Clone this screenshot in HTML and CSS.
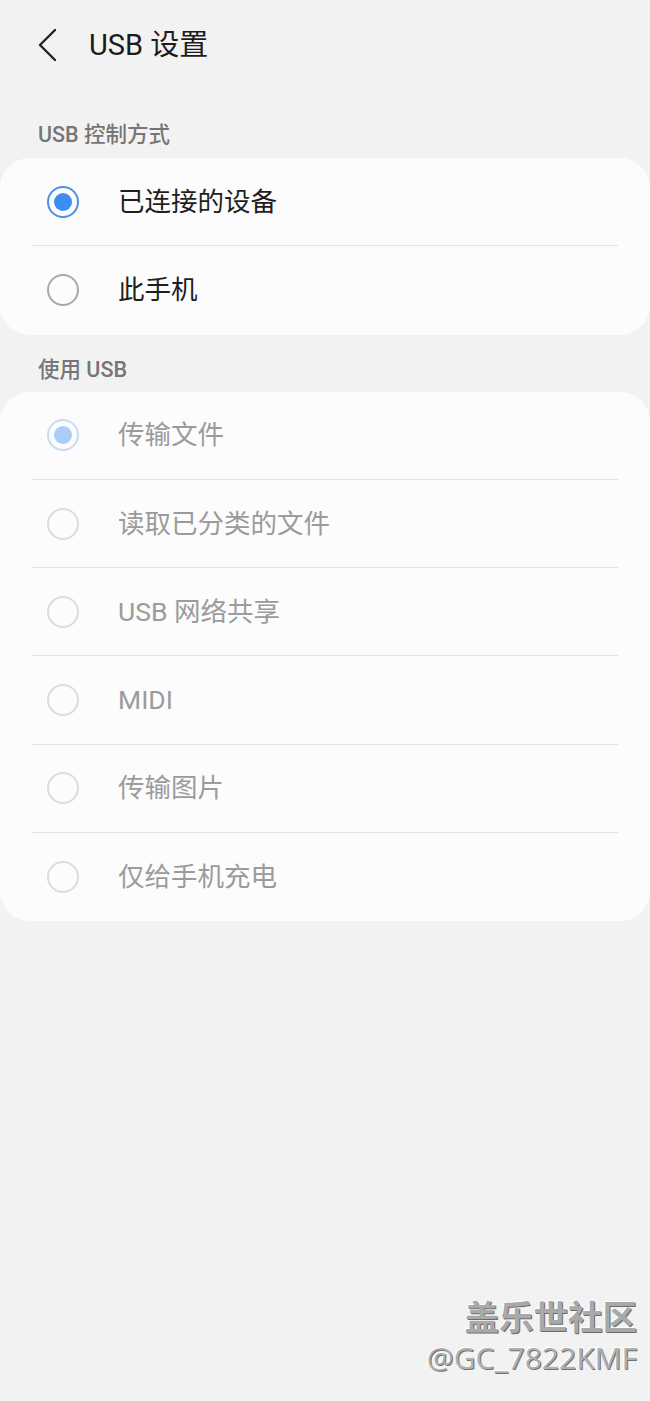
FILE: index.html
```html
<!DOCTYPE html>
<html lang="zh-CN">
<head>
<meta charset="utf-8">
<title>USB 设置</title>
<link rel="stylesheet" href="styles.css">
</head>
<body>
<div class="page">
  <header class="appbar">
    <svg class="back" width="24" height="36" viewBox="0 0 24 36"><polyline points="18,3 3,18 18,33" fill="none" stroke="#222" stroke-width="2.4" stroke-linecap="round" stroke-linejoin="round"/></svg>
    <h1 class="title">USB 设置</h1>
  </header>

  <div class="section-label first">USB 控制方式</div>
  <div class="card">
    <div class="row">
      <span class="radio checked"></span>
      <span class="label">已连接的设备</span>
    </div>
    <div class="row">
      <span class="radio"></span>
      <span class="label">此手机</span>
    </div>
  </div>

  <div class="section-label">使用 USB</div>
  <div class="card disabled">
    <div class="row">
      <span class="radio checked"></span>
      <span class="label">传输文件</span>
    </div>
    <div class="row">
      <span class="radio"></span>
      <span class="label">读取已分类的文件</span>
    </div>
    <div class="row">
      <span class="radio"></span>
      <span class="label">USB 网络共享</span>
    </div>
    <div class="row">
      <span class="radio"></span>
      <span class="label">MIDI</span>
    </div>
    <div class="row">
      <span class="radio"></span>
      <span class="label">传输图片</span>
    </div>
    <div class="row">
      <span class="radio"></span>
      <span class="label">仅给手机充电</span>
    </div>
  </div>

  <div class="watermark">
    <div class="wm-brand">盖乐世社区</div>
    <div class="wm-user">@GC_7822KMF</div>
  </div>
</div>
</body>
</html>
```

FILE: styles.css
```css
html, body {
  margin: 0;
  padding: 0;
  background: #f2f2f2;
}
body {
  font-family: Roboto, "Noto Sans CJK SC", "Noto Sans", sans-serif;
  color: #1f1f1f;
}
.page {
  position: relative;
  width: 650px;
  height: 1401px;
  overflow: hidden;
}
.appbar {
  height: 90px;
  display: flex;
  align-items: center;
  padding-left: 37px;
  box-sizing: border-box;
}
.back {
  display: block;
}
.title {
  margin: 0 0 0 28px;
  font-size: 29px;
  font-weight: 400;
  color: #1c1c1c;
  line-height: 36px;
}
.section-label {
  padding: 23px 0 10px 38px;
  font-size: 21.5px;
  line-height: 24px;
  font-weight: 500;
  color: #767676;
}
.section-label.first {
  padding-top: 33px;
  padding-bottom: 11px;
}
.card {
  background: #fcfcfc;
  border-radius: 30px;
  padding: 0 32px;
}
.row {
  height: 88.3px;
  display: flex;
  align-items: center;
  box-sizing: border-box;
  border-bottom: 1px solid #e3e3e3;
}
.row:last-child {
  border-bottom: none;
}
.radio {
  width: 28px;
  height: 28px;
  margin-left: 15px;
  border-radius: 50%;
  border: 2px solid #a8a8a8;
  box-sizing: content-box;
  display: flex;
  align-items: center;
  justify-content: center;
  flex: none;
}
.radio.checked {
  border-color: #4b8fe8;
}
.radio.checked::after {
  content: "";
  width: 18px;
  height: 18px;
  border-radius: 50%;
  background: #3d8cf2;
}
.label {
  margin-left: 39px;
  font-size: 26.5px;
  line-height: 34px;
  color: #1f1f1f;
}
.disabled .label {
  color: #9b9b9b;
}
.disabled .radio {
  border-color: #dcdcdc;
}
.disabled .radio.checked {
  border-color: #c6dcf6;
}
.disabled .radio.checked::after {
  background: #a9cdf8;
}
.watermark {
  position: absolute;
  right: 13px;
  top: 1292px;
  text-align: right;
  font-family: "Noto Sans CJK SC", "Liberation Sans", sans-serif;
}
.wm-brand {
  font-size: 34.5px;
  line-height: 46px;
  font-weight: 700;
  color: #a9a9a9;
  text-shadow: 1px 1px 0 #6c6c6c, -1px -1px 0 #ffffff;
}
.wm-user {
  font-family: "Open Sans", "Liberation Sans", sans-serif;
  font-size: 30px;
  line-height: 40px;
  color: #b0b0b0;
  text-shadow: 1px 1px 0 #707070, -1px -1px 0 #ffffff;
}
```
